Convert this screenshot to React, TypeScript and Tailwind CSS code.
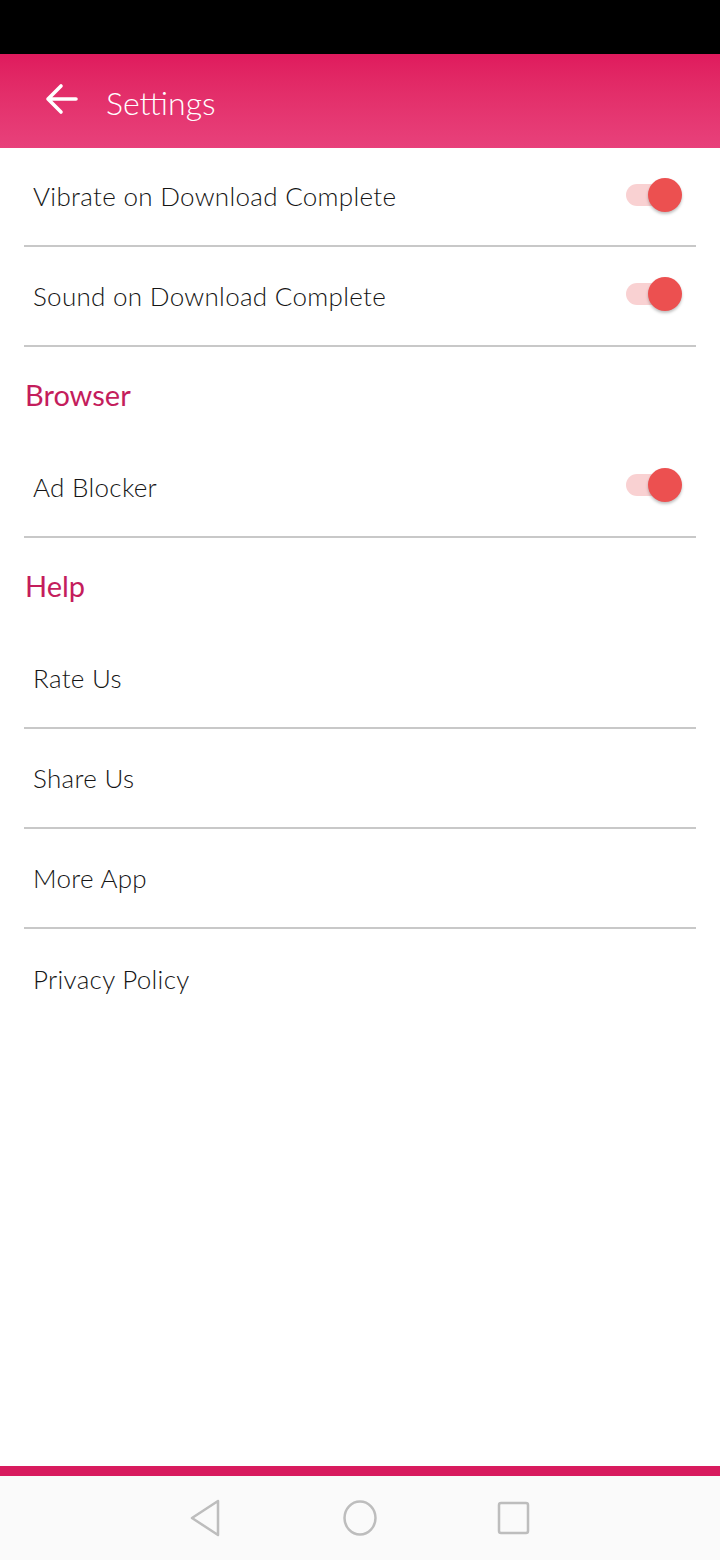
const font = { fontFamily: "Lato, 'Open Sans', sans-serif" }

const Toggle = () => (
  <div className="relative w-[56px] h-[36px] flex items-center">
    <div className="w-[50px] h-[22px] rounded-full bg-[#f9d1d2]" />
    <div className="absolute right-0 top-[1px] w-[34px] h-[34px] rounded-full bg-[#ec5050] shadow-[0_2px_3px_rgba(0,0,0,0.25)]" />
  </div>
)

const Row = ({ label, toggle, divider = true, first = false }: { label: string; toggle?: boolean; divider?: boolean; first?: boolean }) => (
  <div className={`mx-[24px] ${first ? "h-[99px]" : "h-[100px]"} flex items-center justify-between ${divider ? "border-b-2 border-[#c8c8c8]" : ""}`}>
    <span className="pl-[9px] text-[26px] font-light text-[#151515] tracking-[0.3px]">{label}</span>
    {toggle && <div className="mr-[14px] mb-[4px]"><Toggle /></div>}
  </div>
)

const Section = ({ title }: { title: string }) => (
  <div className="h-[91px] flex items-center pl-[25px] pt-[4px]">
    <span className="text-[29px] text-[#c41d5c]">{title}</span>
  </div>
)

export default function App() {
  return (
    <div className="w-[720px] h-[1560px] flex flex-col bg-white" style={font}>
      <div className="h-[54px] bg-black" />
      <div className="h-[94px] flex items-center bg-gradient-to-b from-[#df1a5d] to-[#e8417b] text-white">
        <svg className="ml-[44px] mb-[4px]" width="34" height="32" viewBox="0 0 34 32" fill="none" stroke="white" strokeWidth="3.6" strokeLinecap="round" strokeLinejoin="round">
          <path d="M32 16 H4 M17 3 L4 16 L17 29" />
        </svg>
        <span className="ml-[28px] text-[32px] font-light mt-[4px]">Settings</span>
      </div>
      <div className="flex-1 flex flex-col">
        <Row label="Vibrate on Download Complete" toggle first />
        <Row label="Sound on Download Complete" toggle />
        <Section title="Browser" />
        <Row label="Ad Blocker" toggle />
        <Section title="Help" />
        <Row label="Rate Us" />
        <Row label="Share Us" />
        <Row label="More App" />
        <Row label="Privacy Policy" divider={false} />
      </div>
      <div className="h-[10px] bg-[#d81b5e]" />
      <div className="h-[84px] bg-[#fafafa] flex items-center justify-center gap-[118px]">
        <svg width="36" height="38" viewBox="0 0 36 38" fill="none" stroke="#bdbdbd" strokeWidth="2.5" strokeLinejoin="round">
          <path d="M31 2 L5 19 L31 36 Z" transform="translate(-1 0)" />
        </svg>
        <svg width="36" height="38" viewBox="0 0 36 38" fill="none" stroke="#bdbdbd" strokeWidth="2.5">
          <ellipse cx="18" cy="19" rx="15.5" ry="16.5" />
        </svg>
        <svg width="36" height="38" viewBox="0 0 36 38" fill="none" stroke="#bdbdbd" strokeWidth="2.5">
          <rect x="3" y="4" width="29" height="30" rx="2" />
        </svg>
      </div>
    </div>
  )
}
